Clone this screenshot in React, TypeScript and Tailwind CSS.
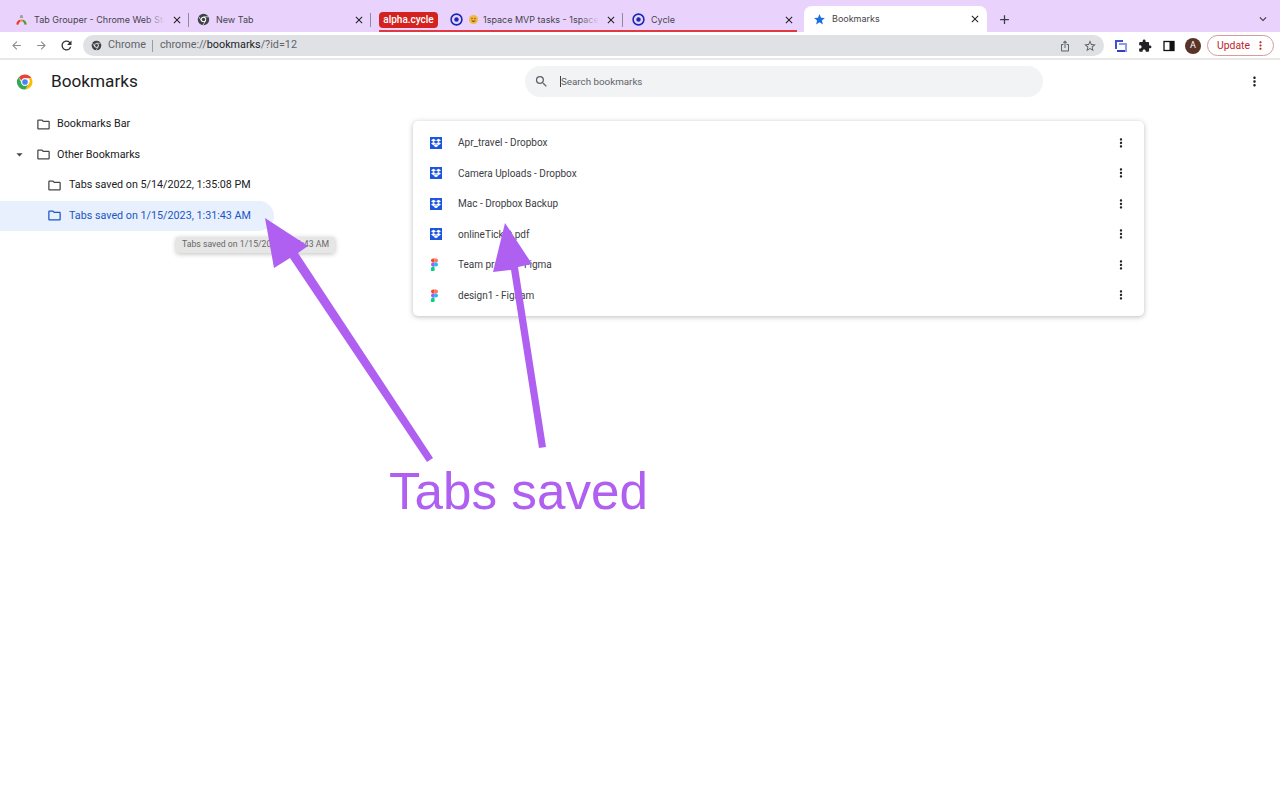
import { MdAdd, MdArrowBack, MdArrowDropDown, MdArrowForward, MdClose, MdExtension, MdIosShare, MdKeyboardArrowDown, MdMoreVert, MdOutlineFolder, MdRefresh, MdSearch, MdStar, MdStarBorder } from "react-icons/md";
import { FaDropbox } from "react-icons/fa";

function ChromeLogo({ size }: { size: number }) {
  return (
    <svg width={size} height={size} viewBox="0 0 48 48" className="shrink-0">
      <path d="M24 4a20 20 0 0 1 17.3 10H24a10 10 0 0 0-9.4 6.6L7.3 11.3A20 20 0 0 1 24 4z" fill="#ea4335" />
      <path d="M41.3 14A20 20 0 0 1 25 44l8.6-15A10 10 0 0 0 33 14z" fill="#fbbc04" />
      <path d="M25 44A20 20 0 0 1 7.3 11.3L15.9 29a10 10 0 0 0 10 4.9L33 30z" fill="#34a853" />
      <circle cx="24" cy="24" r="10" fill="#fff" />
      <circle cx="24" cy="24" r="7.5" fill="#4285f4" />
    </svg>
  );
}

function ChromeGrey({ size }: { size: number }) {
  return (
    <svg width={size} height={size} viewBox="0 0 24 24" className="shrink-0">
      <circle cx="12" cy="12" r="10.5" fill="#3f4246" />
      <circle cx="12" cy="12" r="5" fill="#fff" />
      <circle cx="12" cy="12" r="3.2" fill="#3f4246" />
      <path d="M12 7h9M8 14.5 3.5 7M15.5 15 11 22.5" stroke="#fff" strokeWidth="1.3" />
    </svg>
  );
}

function CycleIcon() {
  return (
    <svg width="13" height="13" viewBox="0 0 13 13" className="shrink-0">
      <circle cx="6.5" cy="6.5" r="5.4" fill="none" stroke="#1c28b4" strokeWidth="1.6" />
      <circle cx="6.5" cy="6.5" r="2.2" fill="#1c28b4" />
    </svg>
  );
}

function GrouperIcon() {
  return (
    <svg width="13" height="13" viewBox="0 0 13 13" className="shrink-0">
      <path d="M5.500 2h2l.8 3H4.700z" fill="#9aa0a6" />
      <path d="M1.500 11.500a5 5 0 0 1 10 0H9.500a3 3 0 0 0-6 0z" fill="#ef8a3a" />
      <path d="M1.500 11.500a5 5 0 0 1 3.500-4.800V8.800a3 3 0 0 0-1.500 2.700z" fill="#e53935" />
      <path d="M8 6.700a5 5 0 0 1 3.500 4.800H9.500A3 3 0 0 0 8 8.800z" fill="#43a047" />
    </svg>
  );
}

function EmojiIcon() {
  return (
    <svg width="9" height="9" viewBox="0 0 9 9" className="shrink-0 mr-[5px]">
      <circle cx="4.500" cy="4.500" r="4.500" fill="#f3b63f" />
      <circle cx="3" cy="3.500" r="0.700" fill="#6b4a1e" />
      <circle cx="6" cy="3.500" r="0.700" fill="#6b4a1e" />
      <path d="M2.300 5.400a2.300 2.300 0 0 0 4.400 0z" fill="#8a5a20" />
    </svg>
  );
}

function FigmaIcon() {
  return (
    <svg width="9" height="13" viewBox="0 0 9 13" className="shrink-0">
      <path d="M1 2.400A2 2 0 0 1 3 .4h1.500v4H3a2 2 0 0 1-2-2z" fill="#f24e1e" />
      <path d="M4.500.4H6a2 2 0 1 1 0 4H4.500z" fill="#ff7262" />
      <path d="M1 6.400a2 2 0 0 1 2-2h1.500v4H3a2 2 0 0 1-2-2z" fill="#a259ff" />
      <circle cx="6" cy="6.400" r="2" fill="#1abcfe" />
      <path d="M1 10.400a2 2 0 0 1 2-2h1.500v2a2 2 0 1 1-3.500-0z" fill="#0acf83" />
    </svg>
  );
}

function DropboxIcon() {
  return (
    <div className="w-3 h-3 bg-[#1c55e0] flex items-center justify-center shrink-0">
      <FaDropbox className="text-white text-[10px]" />
    </div>
  );
}

function Tab({ icon, title, box, sep = true, fade = false }: { icon: React.ReactNode; title: React.ReactNode; box: string; sep?: boolean; fade?: boolean }) {
  return (
    <div className={`${box} h-full flex items-center shrink-0 ${sep ? "border-r border-[#8f8a96]" : ""}`}>
      {icon}
      <div className="ml-[6px] flex-1 min-w-0 text-[9px] font-['Inter',sans-serif] text-[#45434a] whitespace-nowrap overflow-hidden relative">
        {title}
        {fade && <div className="absolute right-0 top-0 bottom-0 w-5 bg-gradient-to-r from-transparent to-[#e9d3fd]" />}
      </div>
      <MdClose className="text-[12px] text-[#1f1f1f] ml-[6px] mr-[5px] shrink-0" />
    </div>
  );
}

const tree = [
  { name: "Bookmarks Bar", nested: false },
  { name: "Other Bookmarks", nested: false, open: true },
  { name: "Tabs saved on 5/14/2022, 1:35:08 PM", nested: true },
  { name: "Tabs saved on 1/15/2023, 1:31:43 AM", nested: true, selected: true },
];

const items = [
  { name: "Apr_travel - Dropbox", icon: "dropbox" },
  { name: "Camera Uploads - Dropbox", icon: "dropbox" },
  { name: "Mac - Dropbox Backup", icon: "dropbox" },
  { name: "onlineTicket.pdf", icon: "dropbox" },
  { name: "Team project - Figma", icon: "figma" },
  { name: "design1 - FigJam", icon: "figma" },
];

export default function App() {
  return (
    <div className="relative w-[1280px] h-[800px] overflow-hidden bg-white font-['Roboto',sans-serif]">
      {/* tab strip */}
      <div className="h-8 bg-[#e9d3fd] flex items-center">
        <div className="w-[6px] shrink-0" />
        <div className="flex items-center h-[14px] mt-[7px]">
          <Tab box="w-[183px] pl-[9px]" icon={<GrouperIcon />} title="Tab Grouper - Chrome Web Store" fade />
          <Tab box="w-[182px] pl-[8px]" icon={<ChromeGrey size={13} />} title="New Tab" />
        </div>
        <div className="relative flex items-center h-[23px] mt-[7px] ml-[8px]">
          <div className="w-[59px] h-4 rounded-[4px] bg-[#d3221f] text-white text-[10px] font-medium flex items-center justify-center shrink-0">alpha.cycle</div>
          <div className="flex items-center h-[14px]">
            <Tab
              box="w-[185px] pl-[12px]"
              icon={<CycleIcon />}
              title={
                <span className="flex items-center">
                  <EmojiIcon />
                  1space MVP tasks - 1space
                </span>
              }
              fade
            />
            <Tab box="w-[177px] pl-[9px]" icon={<CycleIcon />} title="Cycle" sep={false} />
          </div>
          <div className="absolute left-0 right-[3px] bottom-[-1px] h-[2px] bg-[#e2383f]" />
        </div>
        <div className="ml-1 mt-[6px] w-[183px] h-[26px] bg-white rounded-t-lg flex items-center pl-[9px] pr-[6px] shrink-0">
          <MdStar className="text-[13px] text-[#1a6fe0] shrink-0" />
          <div className="ml-[6px] flex-1 text-[9px] font-['Inter',sans-serif] text-[#45434a]">Bookmarks</div>
          <MdClose className="text-[12px] text-[#1f1f1f]" />
        </div>
        <MdAdd className="ml-[10px] mt-[6px] text-[15px] text-[#3c3a40]" />
        <div className="flex-1" />
        <MdKeyboardArrowDown className="mr-[10px] mt-[6px] text-[14px] text-[#3c3a40]" />
      </div>

      {/* toolbar */}
      <div className="h-7 pt-px bg-white border-b-2 border-[#e8e8e8] flex items-center">
        <MdArrowBack className="ml-[10px] text-[13px] text-[#8a8c90]" />
        <MdArrowForward className="ml-[12px] text-[13px] text-[#8a8c90]" />
        <MdRefresh className="ml-[11px] text-[15px] text-[#33353a]" />
        <div className="ml-[9px] w-[1021px] h-[21px] rounded-full bg-[#dfe1e5] flex items-center pl-[8px] pr-[7px] text-[10.8px]">
          <ChromeGrey size={11} />
          <span className="ml-[6px] text-[#5f6368]">Chrome</span>
          <span className="ml-[6px] w-px h-[12px] bg-[#9a9ca0]" />
          <span className="ml-[7px] text-[#5f6368]">
            chrome://<span className="text-[#202124]">bookmarks</span>/?id=12
          </span>
          <div className="flex-1" />
          <MdIosShare className="text-[12px] text-[#5f6368]" />
          <MdStarBorder className="ml-[12px] text-[14px] text-[#5f6368]" />
        </div>
        <svg width="14" height="14" viewBox="0 0 14 14" className="ml-[10px] shrink-0">
          <path d="M1 1h8v2H3v7H1z" fill="#3f50d0" />
          <path d="M5 4h8v9H4v-2h7V6H5z" fill="#8f9ae8" />
          <path d="M3 11h8v2H3z" fill="#2e3fc4" />
        </svg>
        <MdExtension className="ml-[10px] text-[14px] text-[#202124]" />
        <svg width="12" height="12" viewBox="0 0 12 12" className="ml-[11px] shrink-0">
          <rect x="1" y="1.500" width="10" height="9" fill="none" stroke="#111" strokeWidth="1.300" />
          <rect x="6.500" y="1.500" width="4.500" height="9" fill="#111" />
        </svg>
        <div className="ml-[10px] w-4 h-4 rounded-full bg-[#5a3328] text-white text-[9px] flex items-center justify-center shrink-0">A</div>
        <div className="ml-[6px] w-[67px] h-[21px] rounded-full border border-[#d99a9a] flex items-center pl-[9px] text-[10.4px] text-[#c5221f] shrink-0">
          Update
          <MdMoreVert className="ml-[4px] text-[13px]" />
        </div>
      </div>

      {/* page header */}
      <div className="h-[43px] mb-[6px] flex items-center">
        <div className="ml-4 w-[18px]">
          <ChromeLogo size={18} />
        </div>
        <div className="ml-[17px] w-[474px] text-[17.2px] text-[#202124]">Bookmarks</div>
        <div className="w-[518px] h-[31px] rounded-full bg-[#f1f3f4] flex items-center pl-[9px] shrink-0">
          <MdSearch className="text-[15px] text-[#5f6368]" />
          <span className="ml-[11px] w-px h-[11px] bg-[#3c4043]" />
          <span className="pt-px text-[9.8px] text-[#5f6368]">Search bookmarks</span>
        </div>
        <MdMoreVert className="ml-[204px] text-[15px] text-[#202124]" />
      </div>

      {/* content */}
      <div className="flex">
        <div className="w-[413px] shrink-0">
          {tree.map((t) => (
            <div
              key={t.name}
              className={`w-[274px] h-[30.5px] flex items-center rounded-r-full ${t.selected ? "bg-[#e8f0fe] text-[#1a56c4]" : "text-[#202124]"}`}
            >
              <div className="w-[36px] shrink-0 flex justify-end pr-[9px]">
                {t.open && <MdArrowDropDown className="text-[15px] text-[#45474a]" />}
              </div>
              {t.nested && <div className="w-[11px] shrink-0" />}
              <MdOutlineFolder className={`text-[15px] shrink-0 ${t.selected ? "text-[#1a56c4]" : "text-[#45474a]"}`} />
              <span className={`text-[10.75px] whitespace-nowrap ${t.nested ? "ml-[7px]" : "ml-[6px]"}`}>{t.name}</span>
            </div>
          ))}
        </div>
        <div className="w-[731px] mt-3 pt-[6.5px] pb-[5.5px] h-fit rounded-[5px] bg-white shadow-[0_1px_5px_rgba(60,64,67,0.35)]">
          {items.map((it) => (
            <div key={it.name} className="h-[30.5px] flex items-center">
              <div className="w-[45px] pl-[17px] shrink-0 flex">
                {it.icon === "dropbox" ? <DropboxIcon /> : <FigmaIcon />}
              </div>
              <span className="text-[10px] text-[#3c4043] flex-1">{it.name}</span>
              <MdMoreVert className="mr-[16px] text-[14px] text-[#202124]" />
            </div>
          ))}
        </div>
      </div>

      {/* tooltip over the sidebar */}
      <div className="absolute left-[176px] top-[237px] w-[159px] h-4 bg-[#e6e6e6] rounded-[2px] shadow-[0_1px_5px_rgba(0,0,0,0.25)] text-[8.700px] text-[#666666] flex items-center justify-center whitespace-nowrap">
        Tabs saved on 1/15/2023, 1:31:43 AM
      </div>

      {/* annotation arrows */}
      <svg className="absolute left-0 top-0 pointer-events-none" width="1280" height="800" viewBox="0 0 1280 800">
        <polygon points="265,218 274,268 290,258 427,462 433,458 298,253 308,246" fill="#b060f0" />
        <polygon points="505,223 493,272 511,270 539,448 546,447 518,267 532,264" fill="#b060f0" />
      </svg>
      <div className="absolute left-[389px] top-[463px] text-[51.2px] leading-[58px] text-[#b060f0] font-['Liberation_Sans',sans-serif] whitespace-nowrap">
        Tabs saved
      </div>
    </div>
  );
}
